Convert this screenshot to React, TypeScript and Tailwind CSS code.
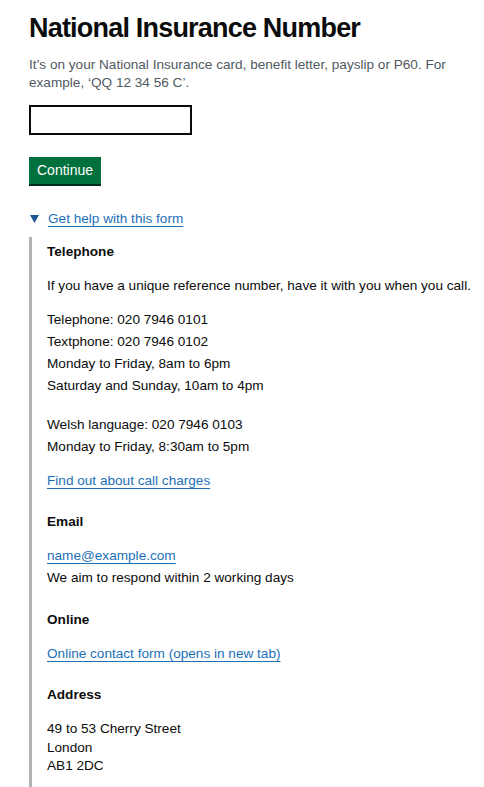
export default function App() {
  const link = 'text-[#1d70b8] underline underline-offset-[3px] decoration-1';

  return (
    <div className="min-h-screen bg-white font-['Liberation_Sans',Arial,sans-serif] text-[#0b0c0c]">
      <main className="pl-[29px] pr-[8px] pt-[12px] pb-[2px]">
        <h1 className="text-[27px] leading-[32px] font-bold tracking-[-0.8px]">National Insurance Number</h1>
        <p className="mt-[12px] max-w-[440px] text-[13.6px] leading-[18px] text-[#505a5f]">
          It’s on your National Insurance card, benefit letter, payslip or P60. For example, ‘QQ 12 34 56 C’.
        </p>

        <input
          type="text"
          className="mt-[13px] block w-[163px] h-[30px] border-2 border-[#0b0c0c] bg-white px-1 text-[13.5px] outline-none"
        />

        <button className="mt-[22px] block h-[27px] px-[8px] bg-[#00703c] text-white text-[14px] leading-[27px] shadow-[0_2px_0_#002d18]">
          Continue
        </button>

        {/* Help details */}
        <div className="mt-[25px]">
          <div className="flex items-center h-[20px]">
            <svg width="9" height="8" viewBox="0 0 9 8" className="ml-[1px] mr-[9px] text-[#1d5a94]">
              <path d="M0 0h9L4.5 8z" fill="currentColor" />
            </svg>
            <a href="#" className={`${link} text-[13.6px] leading-[20px]`}>Get help with this form</a>
          </div>

          <div className="mt-[8px] border-l-[3px] border-[#b1b4b6] pl-[15px] pt-[5px] pb-[11px] text-[13.6px]">
            <h2 className="font-bold leading-[20px]">Telephone</h2>
            <p className="mt-[13px] leading-[22px]">If you have a unique reference number, have it with you when you call.</p>
            <p className="mt-[12px] leading-[22px]">
              Telephone: 020 7946 0101
              <br />
              Textphone: 020 7946 0102
              <br />
              Monday to Friday, 8am to 6pm
              <br />
              Saturday and Sunday, 10am to 4pm
            </p>
            <p className="mt-[17px] leading-[22px]">
              Welsh language: 020 7946 0103
              <br />
              Monday to Friday, 8:30am to 5pm
            </p>
            <p className="mt-[12px] leading-[22px]">
              <a href="#" className={link}>Find out about call charges</a>
            </p>

            <h2 className="mt-[20px] font-bold leading-[20px]">Email</h2>
            <p className="mt-[13px] leading-[22px]">
              <a href="#" className={link}>name@example.com</a>
              <br />
              We aim to respond within 2 working days
            </p>

            <h2 className="mt-[21px] font-bold leading-[20px]">Online</h2>
            <p className="mt-[13px] leading-[22px]">
              <a href="#" className={link}>Online contact form (opens in new tab)</a>
            </p>

            <h2 className="mt-[20px] font-bold leading-[20px]">Address</h2>
            <p className="mt-[15px] leading-[18.5px]">
              49 to 53 Cherry Street
              <br />
              London
              <br />
              AB1 2DC
            </p>
          </div>
        </div>
      </main>
    </div>
  );
}
